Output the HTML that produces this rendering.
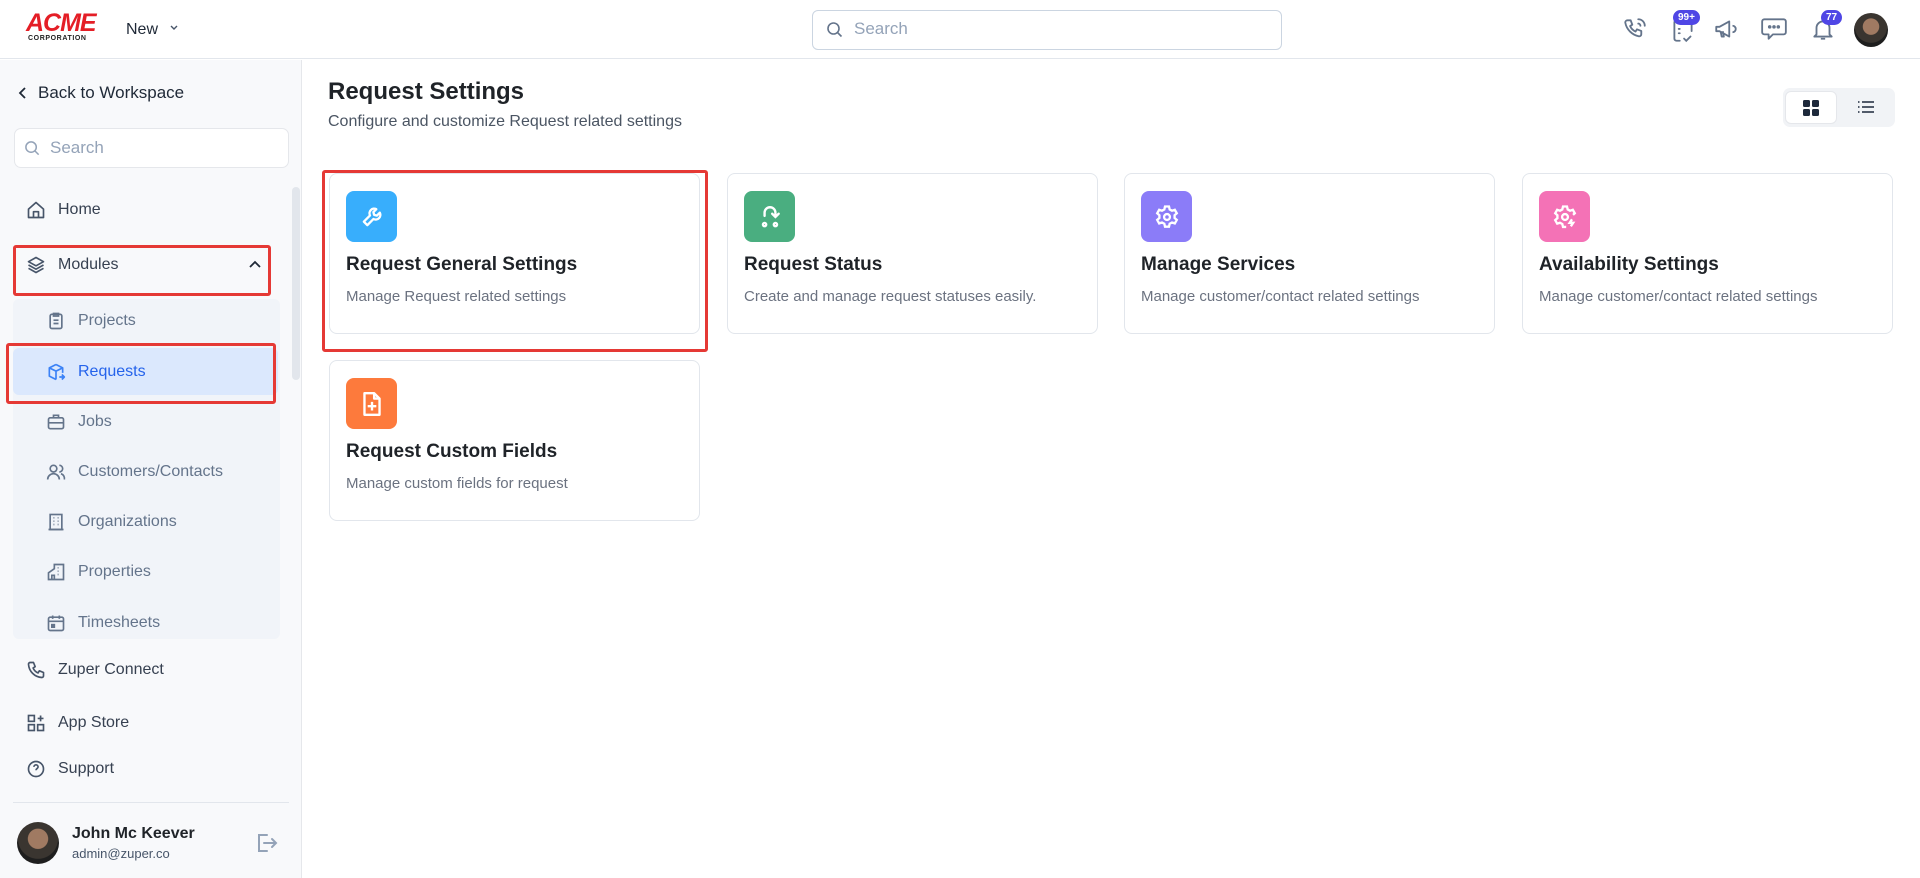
<!DOCTYPE html>
<html><head><meta charset="utf-8"><style>
*{box-sizing:border-box;margin:0;padding:0}
body{width:1920px;height:878px;overflow:hidden;font-family:"Liberation Sans",sans-serif;background:#fff;position:relative;color:#1f2937}
.abs{position:absolute}
svg{display:block}
.hdr{left:0;top:0;width:1920px;height:59px;border-bottom:1px solid #e2e6ec;background:#fff}
.side{left:0;top:60px;width:302px;height:818px;background:#f8f9fb;border-right:1px solid #e5e7eb}
.nav{position:absolute;left:26px;font-size:16px;color:#374151;display:flex;align-items:center;gap:12px}
.sub{position:absolute;left:46px;font-size:16px;color:#64748b;display:flex;align-items:center;gap:12px}
.card{position:absolute;width:371px;height:161px;border:1px solid #e2e6ec;border-radius:8px;background:#fff}
.card .ic{position:absolute;left:16px;top:17px;width:51px;height:51px;border-radius:8px;display:flex;align-items:center;justify-content:center}
.card .t{position:absolute;left:16px;top:80px;font-size:19px;font-weight:bold;color:#1f2328}
.card .d{position:absolute;left:16px;top:114px;font-size:15px;color:#6b7280}
.red{position:absolute;border:3px solid #e53935;border-radius:3px}
.badge{position:absolute;background:#4f46e5;color:#fff;font-size:10px;font-weight:bold;border-radius:9px;padding:2px 5px}
</style></head><body>
<div class="abs hdr">
  <div class="abs" style="left:26px;top:11px;font-family:'Liberation Sans';font-weight:900;font-size:25px;color:#e41e26;letter-spacing:-1px;line-height:24px;font-style:italic">ACME</div>
  <div class="abs" style="left:28px;top:35px;font-size:7px;font-weight:bold;color:#222;letter-spacing:0.6px">CORPORATION</div>
  <div class="abs" style="left:126px;top:21px;font-size:16px;color:#1f2937">New</div>
  <svg class="abs" style="left:169px;top:24px" width="10" height="8" viewBox="0 0 10 8"><path d="M2 2l3 3 3-3" stroke="#475569" stroke-width="1.4" fill="none"/></svg>
  <div class="abs" style="left:812px;top:10px;width:470px;height:40px;border:1px solid #cbd5e1;border-radius:6px"></div>
  <svg class="abs" style="left:826px;top:21px" width="18" height="18" viewBox="0 0 18 18"><circle cx="7.5" cy="7.5" r="5.5" stroke="#64748b" stroke-width="1.6" fill="none"/><path d="M11.5 11.5l4 4" stroke="#64748b" stroke-width="1.6"/></svg>
  <div class="abs" style="left:854px;top:19px;font-size:17px;color:#94a3b8">Search</div>
  <svg class="abs" style="left:1622px;top:16px" width="26" height="26" viewBox="0 0 24 24" fill="none" stroke="#64748b" stroke-width="1.7" stroke-linecap="round" stroke-linejoin="round"><path d="M5 4h3l1.5 4-2 1.3a10 10 0 005 5l1.3-2 4 1.5v3a2 2 0 01-2 2A16 16 0 013 6a2 2 0 012-2z"/><path d="M15 3a6 6 0 016 6M15 7a2 2 0 012 2"/></svg>
  <svg class="abs" style="left:1670px;top:16px" width="26" height="28" viewBox="0 0 24 26" fill="none" stroke="#64748b" stroke-width="1.7" stroke-linecap="round"><path d="M8 4H6a2 2 0 00-2 2v15a2 2 0 002 2h3M16 4h2a2 2 0 012 2v8"/><path d="M13 21l2 2 4-4"/><path d="M8 12h1M8 16h1"/></svg>
  <div class="badge" style="left:1673px;top:10px">99+</div>
  <svg class="abs" style="left:1713px;top:16px" width="26" height="26" viewBox="0 0 24 24" fill="none" stroke="#64748b" stroke-width="1.7" stroke-linejoin="round"><path d="M3 10v4h3l9 5V5L6 10H3z"/><path d="M7 14l1 5h2l-1-5M18 9a3 3 0 010 6"/></svg>
  <svg class="abs" style="left:1760px;top:16px" width="28" height="26" viewBox="0 0 26 24" fill="none" stroke="#64748b" stroke-width="1.7" stroke-linejoin="round"><path d="M4 3h18a2 2 0 012 2v10a2 2 0 01-2 2H12l-4 4v-4H4a2 2 0 01-2-2V5a2 2 0 012-2z"/><circle cx="9" cy="10" r=".8" fill="#64748b"/><circle cx="13" cy="10" r=".8" fill="#64748b"/><circle cx="17" cy="10" r=".8" fill="#64748b"/></svg>
  <svg class="abs" style="left:1810px;top:16px" width="26" height="26" viewBox="0 0 24 24" fill="none" stroke="#64748b" stroke-width="1.7" stroke-linejoin="round"><path d="M6 17V11a6 6 0 0112 0v6l2 2H4l2-2zM10 21h4"/></svg>
  <div class="badge" style="left:1821px;top:10px">77</div>
  <div class="abs" style="left:1854px;top:13px;width:34px;height:34px;border-radius:50%;background:radial-gradient(circle at 50% 40%,#a07a62 0 30%,#3a3530 32% 60%,#1e1e1e 62%)"></div>
</div>

<div class="abs side">
  <svg class="abs" style="left:17px;top:26px" width="12" height="14" viewBox="0 0 12 14"><path d="M8 2L3 7l5 5" stroke="#1f2937" stroke-width="1.8" fill="none"/></svg>
  <div class="abs" style="left:38px;top:23px;font-size:17px;color:#1f2937">Back to Workspace</div>
  <div class="abs" style="left:14px;top:68px;width:275px;height:40px;background:#fff;border:1px solid #e5e7eb;border-radius:7px"></div>
  <svg class="abs" style="left:24px;top:80px" width="17" height="17" viewBox="0 0 18 18"><circle cx="7.5" cy="7.5" r="5.5" stroke="#94a3b8" stroke-width="1.6" fill="none"/><path d="M11.5 11.5l4 4" stroke="#94a3b8" stroke-width="1.6"/></svg>
  <div class="abs" style="left:50px;top:78px;font-size:17px;color:#94a3b8">Search</div>
  <div class="abs" style="left:292px;top:127px;width:8px;height:193px;background:#e2e6ec;border-radius:4px"></div>
  <div class="nav" style="top:140px"><svg width="20" height="20" viewBox="0 0 24 24" fill="none" stroke="#475569" stroke-width="2" stroke-linejoin="round"><path d="M3 11l9-8 9 8v10H3z"/><path d="M9 21v-7h6v7"/></svg>Home</div>
  <div class="nav" style="top:195px"><svg width="20" height="20" viewBox="0 0 24 24" fill="none" stroke="#475569" stroke-width="2" stroke-linejoin="round"><path d="M12 3l9 5-9 5-9-5z"/><path d="M3 12l9 5 9-5M3 16l9 5 9-5"/></svg>Modules</div>
  <svg class="abs" style="left:248px;top:199px" width="14" height="10" viewBox="0 0 14 10"><path d="M2 8l5-5 5 5" stroke="#1f2937" stroke-width="1.8" fill="none"/></svg>
  <div class="abs" style="left:13px;top:239px;width:267px;height:340px;background:#f1f4f9;border-radius:6px"></div>
  <div class="abs" style="left:13px;top:288px;width:265px;height:47px;background:#dbe8fd;border-radius:6px"></div>
  <div class="sub" style="top:251px"><svg width="20" height="20" viewBox="0 0 24 24" fill="none" stroke="#64748b" stroke-width="2"><rect x="5" y="4" width="14" height="17" rx="2"/><path d="M9 3h6v3H9zM9 11h6M9 15h6"/></svg>Projects</div>
  <div class="sub" style="top:302px;color:#2563eb"><svg width="20" height="20" viewBox="0 0 24 24" fill="none" stroke="#3b82f6" stroke-width="2" stroke-linejoin="round"><path d="M12 3l8 4v6M12 3L4 7v10l8 4M4 7l8 4 8-4M12 11v10"/><path d="M16 18h6M19 15l3 3-3 3"/></svg>Requests</div>
  <div class="sub" style="top:352px"><svg width="20" height="20" viewBox="0 0 24 24" fill="none" stroke="#64748b" stroke-width="2"><rect x="3" y="7" width="18" height="13" rx="2"/><path d="M9 7V4h6v3M3 13h18"/></svg>Jobs</div>
  <div class="sub" style="top:402px"><svg width="20" height="20" viewBox="0 0 24 24" fill="none" stroke="#64748b" stroke-width="2"><circle cx="9" cy="8" r="4"/><path d="M2 21a7 7 0 0114 0M16 4a4 4 0 010 8M18 14a6 6 0 014 7"/></svg>Customers/Contacts</div>
  <div class="sub" style="top:452px"><svg width="20" height="20" viewBox="0 0 24 24" fill="none" stroke="#64748b" stroke-width="2"><rect x="5" y="3" width="14" height="18"/><path d="M3 21h18M9 7h1M14 7h1M9 11h1M14 11h1M9 15h1M14 15h1"/></svg>Organizations</div>
  <div class="sub" style="top:502px"><svg width="20" height="20" viewBox="0 0 24 24" fill="none" stroke="#64748b" stroke-width="2"><path d="M10 3h11v18H3v-8l7-5zM7 21v-5h3v5M14 7h1M18 7h0M14 11h1M14 15h1"/></svg>Properties</div>
  <div class="sub" style="top:553px"><svg width="20" height="20" viewBox="0 0 24 24" fill="none" stroke="#64748b" stroke-width="2"><rect x="3" y="5" width="18" height="16" rx="2"/><path d="M8 3v4M16 3v4M3 10h18"/><rect x="7" y="14" width="3" height="3" fill="#64748b"/></svg>Timesheets</div>
  <div class="nav" style="top:600px"><svg width="20" height="20" viewBox="0 0 24 24" fill="none" stroke="#475569" stroke-width="2" stroke-linejoin="round"><path d="M5 3h4l2 5-2.5 1.5a11 11 0 006 6L16 13l5 2v4a2 2 0 01-2 2A17 17 0 013 5a2 2 0 012-2z"/></svg>Zuper Connect</div>
  <div class="nav" style="top:653px"><svg width="20" height="20" viewBox="0 0 24 24" fill="none" stroke="#475569" stroke-width="2"><rect x="3" y="3" width="7" height="7"/><rect x="3" y="14" width="7" height="7"/><rect x="14" y="14" width="7" height="7"/><path d="M17.5 3v7M14 6.5h7"/></svg>App Store</div>
  <div class="nav" style="top:699px"><svg width="20" height="20" viewBox="0 0 24 24" fill="none" stroke="#475569" stroke-width="2"><circle cx="12" cy="12" r="9"/><path d="M9.5 9.5a2.5 2.5 0 115 0c0 2-2.5 2-2.5 4M12 17h0"/></svg>Support</div>
  <div class="abs" style="left:13px;top:742px;width:276px;height:1px;background:#e2e6ec"></div>
  <div class="abs" style="left:17px;top:762px;width:42px;height:42px;border-radius:50%;background:radial-gradient(circle at 50% 40%,#a07a62 0 30%,#3a3530 32% 60%,#1e1e1e 62%)"></div>
  <div class="abs" style="left:72px;top:765px;font-size:16px;font-weight:bold;color:#1f2328">John Mc Keever</div>
  <div class="abs" style="left:72px;top:786px;font-size:13px;color:#475569">admin@zuper.co</div>
  <svg class="abs" style="left:254px;top:771px" width="24" height="24" viewBox="0 0 24 24" fill="none" stroke="#94a3b8" stroke-width="2" stroke-linecap="round"><path d="M13 4H5v16h8M10 12h11M18 8l4 4-4 4"/></svg>
</div>
<div class="red" style="left:13px;top:245px;width:258px;height:51px"></div>
<div class="red" style="left:6px;top:343px;width:270px;height:61px"></div>

<div class="abs" style="left:328px;top:78px;font-size:24px;font-weight:bold;color:#1f2328">Request Settings</div>
<div class="abs" style="left:328px;top:113px;font-size:16px;color:#4b5563">Configure and customize Request related settings</div>
<div class="abs" style="left:1783px;top:88px;width:112px;height:39px;background:#f1f3f6;border-radius:7px"></div>
<div class="abs" style="left:1785px;top:91px;width:52px;height:33px;background:#fff;border-radius:6px;border:1px solid #e5e7eb"></div>
<svg class="abs" style="left:1803px;top:100px" width="16" height="16" viewBox="0 0 16 16" fill="#1e293b"><rect x="0" y="0" width="7" height="7" rx="1.5"/><rect x="9" y="0" width="7" height="7" rx="1.5"/><rect x="0" y="9" width="7" height="7" rx="1.5"/><rect x="9" y="9" width="7" height="7" rx="1.5"/></svg>
<svg class="abs" style="left:1858px;top:100px" width="16" height="14" viewBox="0 0 16 14" stroke="#1e293b" stroke-width="1.6"><path d="M4 2h12M4 7h12M4 12h12M0 2h1.5M0 7h1.5M0 12h1.5"/></svg>

<div class="card" style="left:329px;top:173px"><div class="ic" style="background:#38aefc"><svg width="28" height="28" viewBox="0 0 24 24" fill="none" stroke="#fff" stroke-width="2" stroke-linejoin="round"><path d="M14.7 6.3a4 4 0 00-5.4 5.4L4 17l3 3 5.3-5.3a4 4 0 005.4-5.4l-2.5 2.5-2.4-.6-.6-2.4z" transform="translate(1,-1)"/></svg></div><div class="t">Request General Settings</div><div class="d">Manage Request related settings</div></div>
<div class="card" style="left:727px;top:173px"><div class="ic" style="background:#4aae80"><svg width="26" height="26" viewBox="0 0 24 24" fill="none" stroke="#fff" stroke-width="2.2" stroke-linecap="round"><path d="M7 11V8a5 5 0 0110 0v3M14 9l3 3 3-3"/><circle cx="7" cy="19" r="1.5"/><circle cx="17" cy="19" r="1.5"/></svg></div><div class="t">Request Status</div><div class="d">Create and manage request statuses easily.</div></div>
<div class="card" style="left:1124px;top:173px"><div class="ic" style="background:#8b7cf8"><svg width="28" height="28" viewBox="0 0 24 24" fill="none" stroke="#fff" stroke-width="2"><path d="M10.3 3h3.4l.6 2.5 2 1.1 2.4-.8 1.7 3-1.9 1.7v2.3l1.9 1.7-1.7 3-2.4-.8-2 1.1-.6 2.5h-3.4l-.6-2.5-2-1.1-2.4.8-1.7-3 1.9-1.7V10.5L3.6 8.8l1.7-3 2.4.8 2-1.1z"/><circle cx="12" cy="12" r="2.5"/></svg></div><div class="t">Manage Services</div><div class="d">Manage customer/contact related settings</div></div>
<div class="card" style="left:1522px;top:173px"><div class="ic" style="background:#f472b6"><svg width="28" height="28" viewBox="0 0 24 24" fill="none" stroke="#fff" stroke-width="2"><path d="M13 20.5h-2.7l-.6-2.5-2-1.1-2.4.8-1.7-3 1.9-1.7V10.5L3.6 8.8l1.7-3 2.4.8 2-1.1.6-2.5h3.4l.6 2.5 2 1.1 2.4-.8 1.7 3-1.5 1.4"/><circle cx="12" cy="12" r="2.5"/><path d="M18 14l-2 3h3l-2 3"/></svg></div><div class="t">Availability Settings</div><div class="d">Manage customer/contact related settings</div></div>
<div class="card" style="left:329px;top:360px"><div class="ic" style="background:#fd7a3c"><svg width="26" height="28" viewBox="0 0 24 26" fill="none" stroke="#fff" stroke-width="2.2" stroke-linejoin="round"><path d="M5 3h9l5 5v15H5z"/><path d="M14 3v5h5M12 11v8M8 15h8"/></svg></div><div class="t">Request Custom Fields</div><div class="d">Manage custom fields for request</div></div>
<div class="red" style="left:322px;top:170px;width:386px;height:182px"></div>
</body></html>
